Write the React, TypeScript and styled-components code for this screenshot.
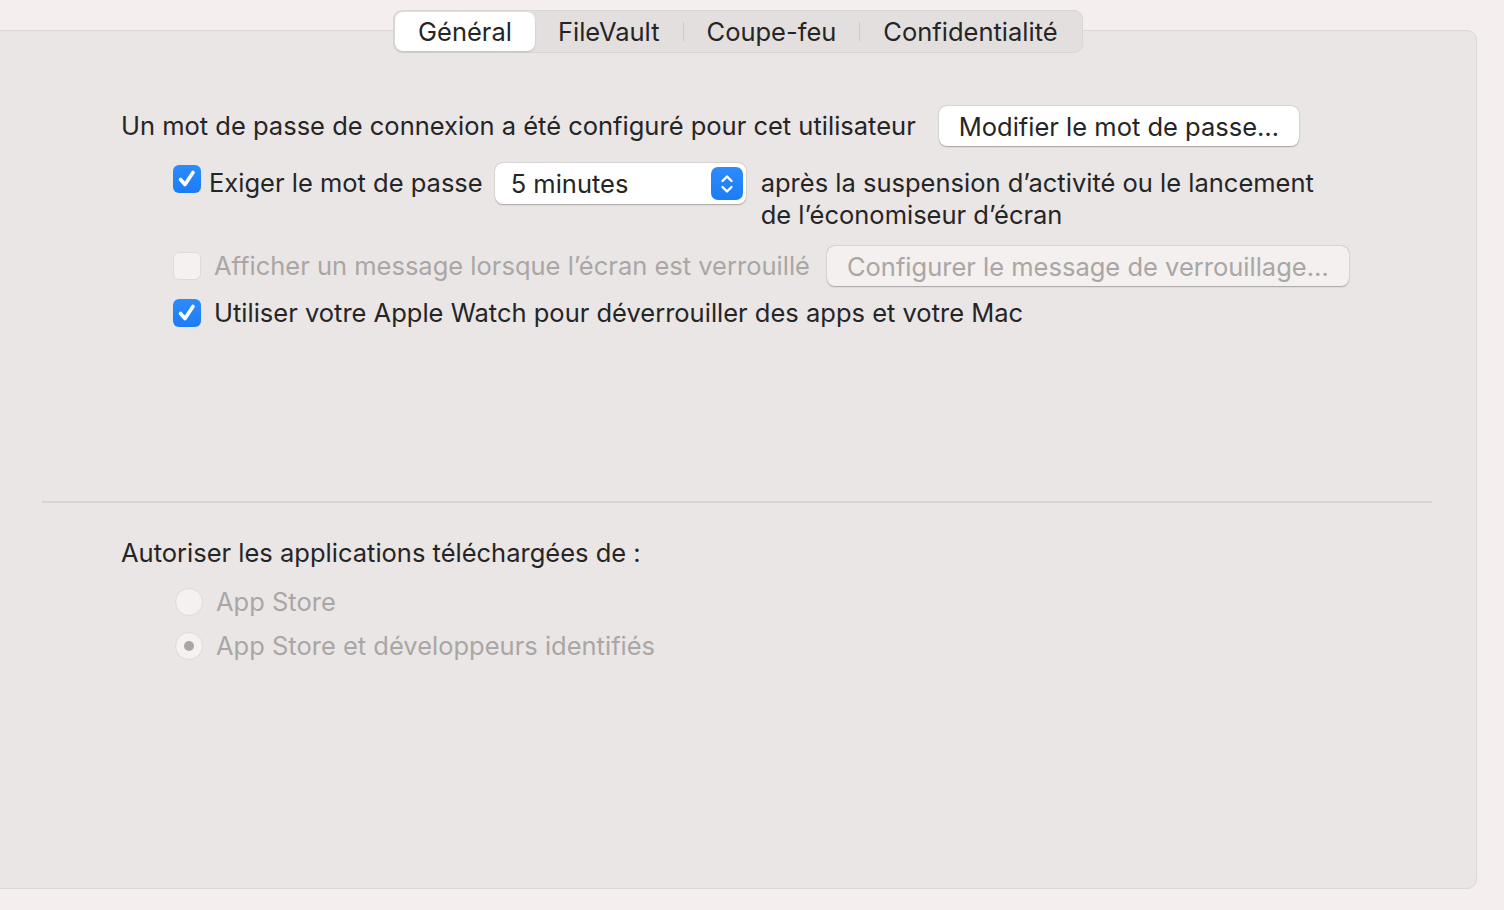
import React from "react";
import styled, { createGlobalStyle } from "styled-components";

const GlobalStyle = createGlobalStyle`
  html, body {
    margin: 0;
    padding: 0;
    background: #f4efee;
    overflow: hidden;
  }
  body {
    font-family: Inter, "Noto Sans", sans-serif;
    color: #262525;
    -webkit-font-smoothing: antialiased;
  }
`;

const Page = styled.div`
  width: 1504px;
  height: 910px;
  padding-top: 30px;
  box-sizing: border-box;
`;

const Panel = styled.div`
  margin-left: -12px;
  width: 1489px;
  height: 859px;
  box-sizing: border-box;
  background: #eae6e5;
  border: 1px solid #dcd7d6;
  border-radius: 10px;
  display: flex;
  flex-direction: column;
  align-items: flex-start;
`;

const Tabs = styled.div`
  margin: -21px 0 0 404px;
  height: 43px;
  box-sizing: border-box;
  padding: 1px;
  display: flex;
  align-items: stretch;
  background: #e3dfde;
  border: 1px solid #d9d5d4;
  border-radius: 9px;
`;

const Tab = styled.div<{ $active?: boolean }>`
  display: flex;
  align-items: center;
  padding: 0 23px;
  font-size: 25.5px;
  border-radius: 8px;
  background: ${(p) => (p.$active ? "#ffffff" : "transparent")};
  box-shadow: ${(p) => (p.$active ? "0 1px 2px rgba(0,0,0,0.15)" : "none")};
`;

const TabSep = styled.div`
  width: 1px;
  margin: 10px 0;
  background: #cdc9c8;
`;

const Body = styled.div<{ $top: number }>`
  padding: ${(p) => p.$top}px 0 0 132px;
  display: flex;
  flex-direction: column;
`;

const Row = styled.div<{ $indent?: number; $top?: number; $align?: string }>`
  display: flex;
  align-items: ${(p) => p.$align ?? "center"};
  padding-left: ${(p) => p.$indent ?? 0}px;
  margin-top: ${(p) => p.$top ?? 0}px;
`;

const Label = styled.span<{ $disabled?: boolean; $gap?: number; $top?: number }>`
  font-size: 25.5px;
  line-height: 32px;
  white-space: nowrap;
  margin-left: ${(p) => p.$gap ?? 0}px;
  margin-top: ${(p) => p.$top ?? 0}px;
  color: ${(p) => (p.$disabled ? "#aaa6a5" : "#262525")};
`;

const PushButton = styled.div<{ $disabled?: boolean; $gap?: number }>`
  height: 40px;
  box-sizing: border-box;
  margin-left: ${(p) => p.$gap ?? 0}px;
  padding: 0 20px;
  display: flex;
  align-items: center;
  font-size: 25.5px;
  white-space: nowrap;
  border-radius: 8px;
  color: ${(p) => (p.$disabled ? "#aaa6a5" : "#262525")};
  background: ${(p) => (p.$disabled ? "#f3f0ef" : "#ffffff")};
  box-shadow: 0 0.5px 1.5px rgba(0, 0, 0, 0.28), 0 0 0 0.5px rgba(0, 0, 0, 0.06);
`;

const Box = styled.div<{ $checked?: boolean; $top?: number }>`
  width: 28px;
  height: 28px;
  flex: none;
  box-sizing: border-box;
  margin-top: ${(p) => p.$top ?? 0}px;
  border-radius: 6px;
  display: flex;
  align-items: center;
  justify-content: center;
  background: ${(p) =>
    p.$checked ? "linear-gradient(#2d8cfb, #1a7cf6)" : "#f4f1f0"};
  border: ${(p) => (p.$checked ? "none" : "1px solid #dedad9")};
`;

const Popup = styled.div`
  width: 251px;
  height: 41px;
  box-sizing: border-box;
  margin-left: 12px;
  padding: 0 3px 0 16px;
  display: flex;
  align-items: center;
  justify-content: space-between;
  background: #ffffff;
  border-radius: 8px;
  box-shadow: 0 0.5px 1.5px rgba(0, 0, 0, 0.28), 0 0 0 0.5px rgba(0, 0, 0, 0.06);
  font-size: 25.5px;
`;

const Stepper = styled.div`
  width: 32px;
  height: 33px;
  border-radius: 7px;
  background: linear-gradient(#2d8cfb, #1a7cf6);
  display: flex;
  align-items: center;
  justify-content: center;
`;

const Wrap = styled.div`
  display: flex;
  flex-direction: column;
  margin-left: 15px;
  padding-top: 4px;
`;

const Spacer = styled.div`
  height: 172px;
`;

const Divider = styled.div`
  margin: 0 0 0 53px;
  width: 1390px;
  height: 2px;
  background: #d8d4d3;
`;

const Radio = styled.div<{ $selected?: boolean }>`
  width: 28px;
  height: 28px;
  flex: none;
  box-sizing: border-box;
  border-radius: 50%;
  background: #f4f1f0;
  border: 1px solid #dedad9;
  display: flex;
  align-items: center;
  justify-content: center;
  &::after {
    content: "";
    display: ${(p) => (p.$selected ? "block" : "none")};
    width: 10px;
    height: 10px;
    border-radius: 50%;
    background: #a9a5a4;
  }
`;

const Check = () => (
  <svg width="22" height="22" viewBox="0 0 22 22">
    <path
      d="M4.5 11.5 L9 16.5 L17 4.5"
      fill="none"
      stroke="#fff"
      strokeWidth="3.6"
      strokeLinecap="round"
      strokeLinejoin="round"
    />
  </svg>
);

const Chevrons = () => (
  <svg width="16" height="24" viewBox="0 0 16 24">
    <path
      d="M3.5 9 L8 4.5 L12.5 9 M3.5 15 L8 19.5 L12.5 15"
      fill="none"
      stroke="#fff"
      strokeWidth="2.4"
      strokeLinecap="round"
      strokeLinejoin="round"
    />
  </svg>
);

export default function App() {
  return (
    <Page>
      <GlobalStyle />
      <Panel>
        <Tabs>
          <Tab $active>Général</Tab>
          <Tab>FileVault</Tab>
          <TabSep />
          <Tab>Coupe-feu</Tab>
          <TabSep />
          <Tab>Confidentialité</Tab>
        </Tabs>
        <Body $top={53}>
          <Row>
            <Label>Un mot de passe de connexion a été configuré pour cet utilisateur</Label>
            <PushButton $gap={23}>Modifier le mot de passe…</PushButton>
          </Row>
          <Row $indent={52} $top={17} $align="flex-start">
            <Box $checked $top={2}>
              <Check />
            </Box>
            <Label $gap={8} $top={4}>Exiger le mot de passe</Label>
            <Popup>
              <span>5 minutes</span>
              <Stepper>
                <Chevrons />
              </Stepper>
            </Popup>
            <Wrap>
              <Label>après la suspension d’activité ou le lancement</Label>
              <Label>de l’économiseur d’écran</Label>
            </Wrap>
          </Row>
          <Row $indent={52} $top={15}>
            <Box />
            <Label $disabled $gap={13}>Afficher un message lorsque l’écran est verrouillé</Label>
            <PushButton $disabled $gap={17}>Configurer le message de verrouillage…</PushButton>
          </Row>
          <Row $indent={52} $top={11}>
            <Box $checked>
              <Check />
            </Box>
            <Label $gap={13}>Utiliser votre Apple Watch pour déverrouiller des apps et votre Mac</Label>
          </Row>
        </Body>
        <Spacer />
        <Divider />
        <Body $top={34}>
          <Row>
            <Label>Autoriser les applications téléchargées de :</Label>
          </Row>
          <Row $indent={54} $top={17}>
            <Radio />
            <Label $disabled $gap={13}>App Store</Label>
          </Row>
          <Row $indent={54} $top={12}>
            <Radio $selected />
            <Label $disabled $gap={13}>App Store et développeurs identifiés</Label>
          </Row>
        </Body>
      </Panel>
    </Page>
  );
}
